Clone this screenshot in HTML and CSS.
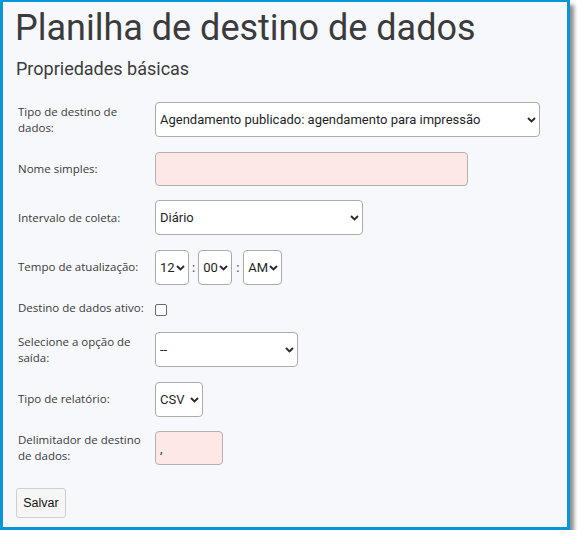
FILE: index.html
```html
<!DOCTYPE html>
<html lang="pt">
<head>
    <meta charset="UTF-8">
    <meta name="viewport" content="width=device-width, initial-scale=1.0">
    <title>Planilha de destino de dados</title>

    <link rel="stylesheet" href="styles.css">
</head>
<body>

    <div class="sheet">
        <h1 class="title">Planilha de destino de dados</h1>
        <h2 class="subtitle">Propriedades básicas</h2>

        <div class="form">
            <div class="row">
                <label class="label">Tipo de destino de dados:</label>
                <span class="select-wrap">
                    <select class="select w-type">
                        <option>Agendamento publicado: agendamento para impressão</option>
                    </select>
                    <svg class="chev" width="9" height="6" viewBox="0 0 9 6"><polyline points="1,1 4.5,4.5 8,1" fill="none" stroke="#2a2a2a" stroke-width="1.9"/></svg>
                </span>
            </div>

            <div class="row row-input">
                <label class="label">Nome simples:</label>
                <input class="input w-name" type="text">
            </div>

            <div class="row">
                <label class="label">Intervalo de coleta:</label>
                <span class="select-wrap">
                    <select class="select w-interval">
                        <option>Diário</option>
                    </select>
                    <svg class="chev" width="9" height="6" viewBox="0 0 9 6"><polyline points="1,1 4.5,4.5 8,1" fill="none" stroke="#2a2a2a" stroke-width="1.9"/></svg>
                </span>
            </div>

            <div class="row">
                <label class="label">Tempo de atualização:</label>
                <div class="time">
                    <span class="select-wrap">
                        <select class="select small w-hour"><option>12</option></select>
                        <svg class="chev" width="9" height="6" viewBox="0 0 9 6"><polyline points="1,1 4.5,4.5 8,1" fill="none" stroke="#2a2a2a" stroke-width="1.9"/></svg>
                    </span>
                    <span class="colon">:</span>
                    <span class="select-wrap">
                        <select class="select small w-hour"><option>00</option></select>
                        <svg class="chev" width="9" height="6" viewBox="0 0 9 6"><polyline points="1,1 4.5,4.5 8,1" fill="none" stroke="#2a2a2a" stroke-width="1.9"/></svg>
                    </span>
                    <span class="colon colon-2">:</span>
                    <span class="select-wrap">
                        <select class="select small w-ampm"><option>AM</option></select>
                        <svg class="chev" width="9" height="6" viewBox="0 0 9 6"><polyline points="1,1 4.5,4.5 8,1" fill="none" stroke="#2a2a2a" stroke-width="1.9"/></svg>
                    </span>
                </div>
            </div>

            <div class="row row-check">
                <label class="label">Destino de dados ativo:</label>
                <input class="check" type="checkbox">
            </div>

            <div class="row">
                <label class="label">Selecione a opção de saída:</label>
                <span class="select-wrap">
                    <select class="select w-output">
                        <option>--</option>
                    </select>
                    <svg class="chev" width="9" height="6" viewBox="0 0 9 6"><polyline points="1,1 4.5,4.5 8,1" fill="none" stroke="#2a2a2a" stroke-width="1.9"/></svg>
                </span>
            </div>

            <div class="row">
                <label class="label">Tipo de relatório:</label>
                <span class="select-wrap">
                    <select class="select small w-report">
                        <option>CSV</option>
                    </select>
                    <svg class="chev" width="9" height="6" viewBox="0 0 9 6"><polyline points="1,1 4.5,4.5 8,1" fill="none" stroke="#2a2a2a" stroke-width="1.9"/></svg>
                </span>
            </div>

            <div class="row row-input">
                <label class="label">Delimitador de destino de dados:</label>
                <input class="input w-delim" type="text" value=",">
            </div>
        </div>

        <button class="btn">Salvar</button>
    </div>

</body>
</html>
```

FILE: styles.css
```css
body{
    margin: 0;
    background: #ffffff;
}

.sheet{
    width: 570px;
    height: 530px;
    box-sizing: border-box;
    border: 3px solid #0996d7;
    border-top-width: 2px;
    background: #f7f8fc;
    padding: 6px 13px 0 13px;
    box-shadow: 4px 5px 4px rgba(0, 0, 0, 0.45);
}

.title{
    margin: 0 0 0 -1px;
    font-family: Roboto, "Liberation Sans", sans-serif;
    font-weight: 400;
    font-size: 36px;
    line-height: 41px;
    color: #3b3b3b;
}

.subtitle{
    margin: 9px 0 0 0;
    font-family: Roboto, "Liberation Sans", sans-serif;
    font-weight: 400;
    font-size: 18px;
    line-height: 21px;
    color: #3b3b3b;
}

.form{
    margin-top: 23px;
}

.row{
    display: grid;
    grid-template-columns: 139px auto;
    align-items: center;
    justify-items: start;
    height: 35px;
    margin-bottom: 14.5px;
}

.row-input{
    height: 34px;
}

.row-check{
    height: 18.5px;
}

.label{
    padding: 0 6px 0 2px;
    font-family: "Open Sans", "Noto Sans", sans-serif;
    font-size: 11.5px;
    line-height: 16px;
    color: #3a3a3a;
}

.select-wrap{
    position: relative;
    display: inline-block;
    height: 35px;
}

.select{
    appearance: none;
    -webkit-appearance: none;
    height: 35px;
    box-sizing: border-box;
    margin: 0;
    border: 1px solid #ababab;
    border-radius: 4px;
    background: #ffffff;
    padding: 0 14px 0 4px;
    font-family: Roboto, "Liberation Sans", sans-serif;
    font-size: 13px;
    color: #1f1f1f;
}

.select.small{
    padding-right: 0;
}

.chev{
    position: absolute;
    right: 4px;
    top: 15px;
    pointer-events: none;
}

.w-type{ width: 385px; }
.w-interval{ width: 208px; }
.w-output{ width: 143px; }
.w-report{ width: 48px; }
.w-hour{ width: 34px; }
.w-ampm{ width: 39px; }

.time{
    display: flex;
    align-items: center;
}

.colon{
    margin: 0 3px;
    font-family: "Open Sans", sans-serif;
    font-size: 12px;
    color: #444;
}

.colon-2{
    margin: 0 4px;
}

.input{
    height: 34px;
    box-sizing: border-box;
    margin: 0;
    border: 1px solid #b7b0b0;
    border-radius: 4px;
    background: #fde8e6;
    padding: 0 4px;
    font-family: Roboto, "Liberation Sans", sans-serif;
    font-size: 13px;
    color: #333;
}

.w-name{ width: 313px; }
.w-delim{ width: 68px; }

.check{
    appearance: none;
    -webkit-appearance: none;
    width: 12px;
    height: 12px;
    margin: 3px 0 0 0;
    border: 1px solid #6b6b6b;
    border-radius: 2px;
    background: #ffffff;
}

.btn{
    margin-top: 8px;
    width: 50px;
    height: 30px;
    border: 1px solid #cfcfcf;
    border-radius: 3px;
    background: #f6f6f6;
    font-family: "Liberation Sans", Arial, sans-serif;
    font-size: 12.5px;
    color: #111;
    padding: 0;
}
```
